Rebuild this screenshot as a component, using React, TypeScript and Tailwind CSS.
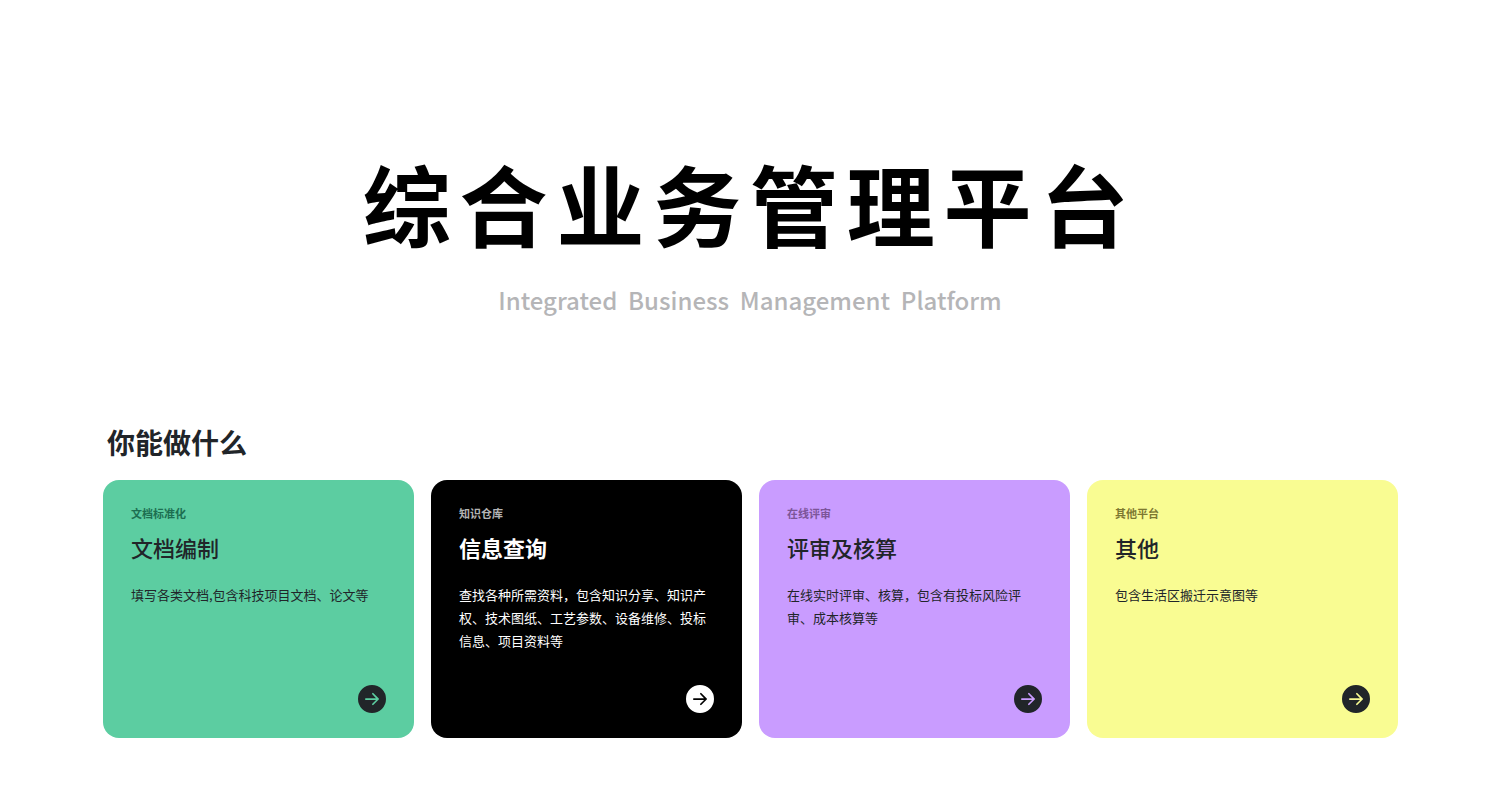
import { BsArrowRightCircleFill } from "react-icons/bs"
import clsx from "clsx"

type Entry = {
    tag: string
    title: string
    description: string
    className: string
    titleClassName: string
    tagClassName: string
}

const entries: Entry[] = [
    {
        tag: "文档标准化",
        title: "文档编制",
        description: "填写各类文档,包含科技项目文档、论文等",
        className: "bg-[#5ccda1] text-[#212529]",
        titleClassName: "font-medium",
        tagClassName: "text-[#1d6f51]",
    },
    {
        tag: "知识仓库",
        title: "信息查询",
        description:
            "查找各种所需资料，包含知识分享、知识产权、技术图纸、工艺参数、设备维修、投标信息、项目资料等",
        className: "bg-black text-white",
        titleClassName: "font-bold",
        tagClassName: "text-[#b3b3b3]",
    },
    {
        tag: "在线评审",
        title: "评审及核算",
        description: "在线实时评审、核算，包含有投标风险评审、成本核算等",
        className: "bg-[#c99cff] text-[#212529]",
        titleClassName: "font-medium",
        tagClassName: "text-[#7c5598]",
    },
    {
        tag: "其他平台",
        title: "其他",
        description: "包含生活区搬迁示意图等",
        className: "bg-[#f9fc92] text-[#212529]",
        titleClassName: "font-medium",
        tagClassName: "text-[#7d7831]",
    },
]

function EntryCard({ entry }: { entry: Entry }) {
    return (
        <a
            href="#"
            className={clsx(
                "flex min-h-[258px] flex-col rounded-2xl px-7 pt-[23px] pb-[25px]",
                entry.className
            )}
        >
            <span
                className={clsx(
                    "text-[11px] leading-5 font-bold",
                    entry.tagClassName
                )}
            >
                {entry.tag}
            </span>
            <h3
                className={clsx(
                    "mt-2 text-[22px] leading-8",
                    entry.titleClassName
                )}
            >
                {entry.title}
            </h3>
            <p className="mt-5 text-[13px] leading-[23px]">
                {entry.description}
            </p>
            <BsArrowRightCircleFill className="mt-auto size-7 self-end" />
        </a>
    )
}

export default function App() {
    return (
        <main className="min-h-screen bg-white pb-10 font-['Noto_Sans_CJK_SC',sans-serif]">
            <header className="flex flex-col items-center pt-[142px] text-center">
                <h1 className="text-[88px] leading-[120px] font-bold tracking-widest text-black">
                    综合业务管理平台
                </h1>
                <p className="mt-5 text-2xl leading-9 font-medium whitespace-pre text-[#b5b5b7]">
                    {"Integrated  Business  Management  Platform"}
                </p>
            </header>
            <section className="mt-[104px] pr-[102px] pl-[103px]">
                <h2 className="pl-1 text-[28px] leading-10 font-bold text-[#212529]">
                    你能做什么
                </h2>
                <div className="mt-[18px] grid gap-[17px] md:grid-cols-2 lg:grid-cols-4">
                    {entries.map((entry) => (
                        <EntryCard key={entry.title} entry={entry} />
                    ))}
                </div>
            </section>
        </main>
    )
}
